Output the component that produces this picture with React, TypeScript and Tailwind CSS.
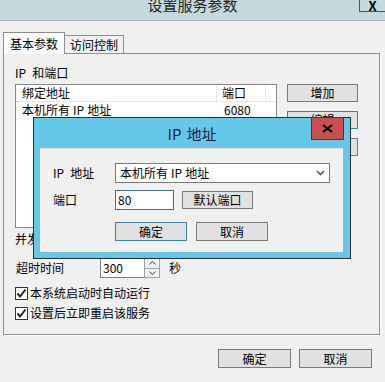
import React from 'react';

function Btn({ label, cls }: { label: string; cls: string }) {
  return (
    <div className={`flex items-center justify-center bg-[#e1e1e1] border text-[12px] leading-[14px] ${cls}`}>
      {label}
    </div>
  );
}

function Check() {
  return (
    <div className="w-[13px] h-[13px] bg-white border border-[#333] flex items-center justify-center">
      <svg width="11" height="11" viewBox="0 0 11 11">
        <path d="M1.5 5.5 L4 8.5 L9.5 1.5" stroke="#222" strokeWidth="2" fill="none" />
      </svg>
    </div>
  );
}

function Ip() {
  return <span className="mx-[3px]">IP</span>;
}

export default function App() {
  return (
    <div className="relative w-[385px] h-[382px] overflow-hidden bg-[#f0f0f0] text-black text-[12px] leading-[14px] font-['Noto_Sans_CJK_SC','Noto_Sans',sans-serif]">
      {/* title bar */}
      <div className="relative h-[21px] bg-[#c4d8de] border-b border-[#a6b3bb] flex justify-center">
        <span className="text-[15px] leading-[15px] -mt-[3px] text-[#262626]">设置服务参数</span>
        <div className="absolute right-[-3px] top-[-1px] w-[29px] h-[13px] border border-[#555] flex justify-center items-end overflow-hidden">
          <span className="text-[13px] leading-[13px] font-bold -mb-[1px] mr-[2px]">X</span>
        </div>
      </div>

      {/* tabs */}
      <div className="flex items-end ml-[3px] mt-[11px] h-[21px]">
        <div className="relative z-10 h-[22px] w-[62px] -mb-px bg-white border border-b-0 border-[#8e8e8e] flex items-center justify-center">
          基本参数
        </div>
        <div className="h-[18px] w-[59px] border border-l-0 border-b-0 border-[#8e8e8e] flex items-center justify-center">
          访问控制
        </div>
      </div>

      {/* panel */}
      <div className="ml-[3px] w-[377px] h-[282px] border border-[#8e8e8e] shadow-[1px_1px_0_#ffffff] flex flex-col pl-[11px] pt-[12px]">
        <div className="h-[14px]">IP<span className="ml-[6px]">和端口</span></div>
        <div className="flex mt-[4px]">
          <div className="w-[262px] h-[144px] bg-white border border-[#828790] flex flex-col">
            <div className="flex h-[17px] border-b border-[#e5e5e5]">
              <div className="w-[201px] border-r border-[#e5e5e5] pl-[6px] flex items-center">绑定地址</div>
              <div className="w-[49px] border-r border-[#e5e5e5] pl-[5px] flex items-center">端口</div>
            </div>
            <div className="flex h-[16px]">
              <div className="w-[202px] pl-[6px] flex items-center">本机所有<Ip />地址</div>
              <div className="pl-[6px] flex items-center">6080</div>
            </div>
          </div>
          <div className="flex flex-col gap-[9px] ml-[10px]">
            <Btn label="增加" cls="w-[71px] h-[18px] border-[#7a7a7a]" />
            <Btn label="编辑" cls="w-[71px] h-[18px] border-[#3c7fb1]" />
            <Btn label="删除" cls="w-[71px] h-[18px] border-[#7a7a7a]" />
          </div>
        </div>
        <div className="flex items-center h-[20px] mt-[1px]">
          <div className="w-[85px]">并发连接数</div>
          <div className="w-[60px] h-[20px] bg-white border border-[#7a7a7a]" />
        </div>
        <div className="flex items-center h-[20px] mt-[9px]">
          <div className="w-[85px] pl-[1px]">超时时间</div>
          <div className="w-[44px] h-[20px] bg-white border border-[#7a7a7a] border-r-0 flex items-center pl-[2px] text-[12px]">300</div>
          <div className="w-[16px] h-[20px] flex flex-col border border-[#a0a0a0] bg-[#f0f0f0]">
            <div className="flex-1 flex items-center justify-center border-b border-[#a0a0a0]">
              <svg width="7" height="4" viewBox="0 0 7 4"><path d="M0.5 3.5 L3.5 0.5 L6.5 3.5" stroke="#444" fill="none" /></svg>
            </div>
            <div className="flex-1 flex items-center justify-center">
              <svg width="7" height="4" viewBox="0 0 7 4"><path d="M0.5 0.5 L3.5 3.5 L6.5 0.5" stroke="#444" fill="none" /></svg>
            </div>
          </div>
          <div className="ml-[9px]">秒</div>
        </div>
        <div className="flex items-center h-[14px] mt-[8px] gap-[2px]">
          <Check />
          <span>本系统启动时自动运行</span>
        </div>
        <div className="flex items-center h-[14px] mt-[6px] gap-[2px]">
          <Check />
          <span>设置后立即重启该服务</span>
        </div>
      </div>

      {/* bottom buttons */}
      <div className="flex justify-end gap-[8px] mt-[14px] mr-[13px]">
        <Btn label="确定" cls="w-[73px] h-[19px] border-[#7a7a7a]" />
        <Btn label="取消" cls="w-[73px] h-[19px] border-[#7a7a7a]" />
      </div>

      {/* dialog overlay */}
      <div className="absolute left-[33px] top-[117px] w-[318px] h-[142px] bg-[#66c8e8] border border-[#2f2f2f] flex flex-col">
        <div className="relative h-[30px] flex justify-center items-center">
          <span className="text-[15px] leading-[16px] text-[#1b1b3a] mt-[2px]">IP<span className="ml-[5px]">地址</span></span>
          <div className="absolute right-[6px] top-[-1px] w-[33px] h-[23px] bg-[#c75050] border border-[#3a3a3a] flex items-center justify-center">
            <svg width="11" height="9" viewBox="0 0 11 9">
              <path d="M1 1 L10 8 M10 1 L1 8" stroke="#000" strokeWidth="2.2" fill="none" />
            </svg>
          </div>
        </div>
        <div className="ml-[6px] w-[303px] h-[104px] bg-[#f0f0f0] border-t border-[#e0e0e0] flex flex-col pl-[13px] pt-[14px]">
          <div className="flex items-center h-[20px]">
            <div className="w-[62px]">IP<span className="ml-[6px]">地址</span></div>
            <div className="w-[215px] h-[20px] bg-white border border-[#7a7a7a] flex items-center pl-[4px] justify-between pr-[4px]">
              <span>本机所有<Ip />地址</span>
              <svg width="9" height="6" viewBox="0 0 9 6"><path d="M1 1 L4.5 4.5 L8 1" stroke="#555" strokeWidth="1.6" fill="none" /></svg>
            </div>
          </div>
          <div className="flex items-center h-[20px] mt-[7px]">
            <div className="w-[62px]">端口</div>
            <div className="w-[59px] h-[20px] bg-white border border-[#3c6e9f] flex items-center pl-[2px]">80</div>
            <Btn label="默认端口" cls="ml-[8px] w-[71px] h-[18px] border-[#7a7a7a]" />
          </div>
          <div className="flex items-center h-[19px] mt-[12px] ml-[62px] gap-[9px]">
            <Btn label="确定" cls="w-[72px] h-[19px] border-[#3c7fb1]" />
            <Btn label="取消" cls="w-[72px] h-[19px] border-[#7a7a7a]" />
          </div>
        </div>
      </div>
    </div>
  );
}
